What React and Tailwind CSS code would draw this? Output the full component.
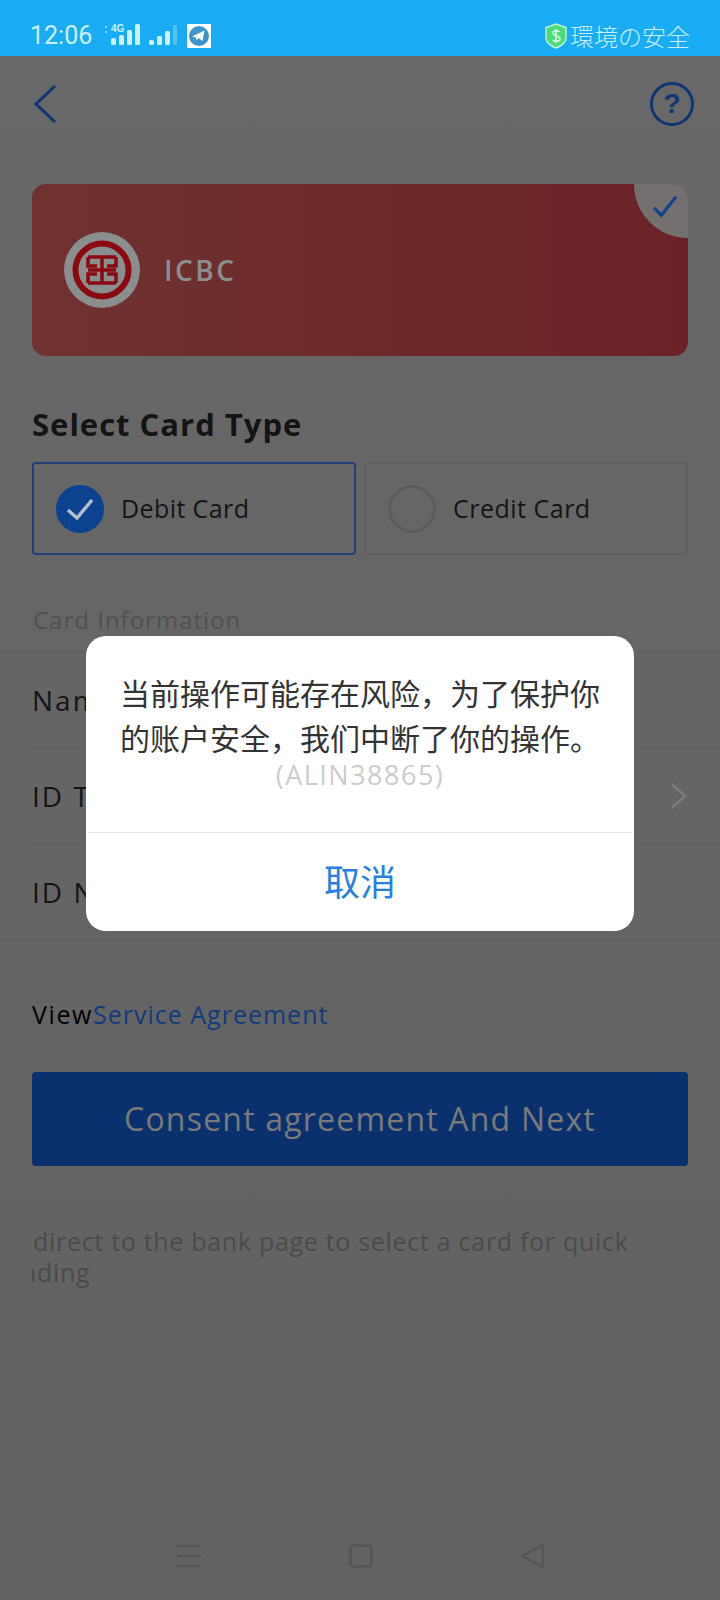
import React from "react";

const HAND = "font-['Open_Sans','Liberation_Sans',sans-serif]";
const CJK = "font-['Noto_Sans_CJK_SC','Noto_Sans_CJK_JP',sans-serif]";

function Signal() {
  return (
    <svg width="82" height="26" viewBox="0 0 82 26" className="ml-[10px]">
      <g fill="#cdeefc">
        <text x="9" y="9" fontSize="10" fontWeight="700" fontFamily="Liberation Sans, sans-serif">4G</text>
        <rect x="9" y="15" width="5" height="7" rx="1.5" />
        <rect x="17" y="12" width="5" height="10" rx="1.5" />
        <rect x="25" y="7" width="5" height="15" rx="1.5" />
        <rect x="33" y="1" width="5" height="21" rx="1.5" />
        <rect x="47" y="17" width="5" height="5" rx="1.5" />
        <rect x="55" y="13" width="5" height="9" rx="1.5" />
        <rect x="63" y="8" width="5" height="14" rx="1.5" />
        <rect x="71" y="2" width="4" height="20" rx="1.5" opacity="0.35" />
      </g>
      <rect x="3" y="3" width="2" height="2" fill="#cdeefc" opacity="0.6" />
      <rect x="3" y="8" width="2" height="2" fill="#cdeefc" opacity="0.6" />
    </svg>
  );
}

function Telegram() {
  return (
    <div className="w-[24px] h-[24px] bg-white flex items-center justify-center ml-[3px]">
      <svg width="22" height="22" viewBox="0 0 22 22">
        <circle cx="11" cy="11" r="10" fill="#3f94cc" />
        <path d="M4 11.5 16.5 5.5 14.5 16 10.5 13 8.5 15.5 8 12.5Z" fill="#fff" />
      </svg>
    </div>
  );
}

function Shield() {
  return (
    <svg width="22" height="26" viewBox="0 0 22 26">
      <path d="M11 1 21 4.5V15C21 20 15 23.500 11 25 7 23.500 1 20 1 15V4.500Z" fill="#4ddb7a" stroke="#bdf0d8" strokeWidth="1.500" />
      <path d="M14.500 9C14 7.500 8 7 8 10c0 3 7 2.500 7 6 0 3-6 2.500-7 1M11 6v14" fill="none" stroke="#d9f8e4" strokeWidth="1.600" />
    </svg>
  );
}

function IcbcLogo() {
  return (
    <div className="w-[76px] h-[76px] rounded-full bg-[#8a8e8e] flex items-center justify-center">
      <svg width="60" height="60" viewBox="0 0 60 60">
        <circle cx="30" cy="30" r="26.500" fill="none" stroke="#8b0a12" strokeWidth="6" />
        <path
          d="M16 17H44M16 17V26H25M44 17V26H35M30 17V43M16 30H44M16 43H44M16 43V34H25M44 43V34H35"
          fill="none"
          stroke="#8b0a12"
          strokeWidth="3.500"
        />
      </svg>
    </div>
  );
}

function Row({ label, chevron, last, height }) {
  return (
    <div className={`${height} flex items-center justify-between ml-[32px] ${last ? "" : "border-b border-[#5f5f5f]"}`}>
      <span className={`${HAND} text-[28px] font-medium text-[#141414] tracking-[2px]`}>{label}</span>
      {chevron && (
        <svg width="18" height="28" viewBox="0 0 18 28" className="mr-[32px]">
          <path d="M2 2 15 14 2 26" fill="none" stroke="#7b7b7b" strokeWidth="2.500" />
        </svg>
      )}
    </div>
  );
}

function TypeBox({ active, label, tracking }) {
  return (
    <div
      className={`flex-1 h-[93px] rounded-[4px] border-2 flex items-center pl-[22px] gap-[17px] ${
        active ? "border-[#1f3f78]" : "border-[#5f5f5f]"
      }`}
    >
      {active ? (
        <svg width="48" height="48" viewBox="0 0 48 48">
          <circle cx="24" cy="24" r="24" fill="#0c4290" />
          <path d="M12 25 21 33 36 15" fill="none" stroke="#b4bdcb" strokeWidth="3.500" />
        </svg>
      ) : (
        <div className="w-[48px] h-[48px] rounded-full border-[3px] border-[#5c5c5c]" />
      )}
      <span className={`${HAND} text-[25px] font-medium text-[#141414] ${tracking}`}>{label}</span>
    </div>
  );
}

export default function App() {
  return (
    <div className="relative w-[720px] h-[1600px] flex flex-col bg-gradient-to-b from-[#686868] to-[#626262] overflow-hidden">
      <div className="h-[56px] bg-[#1aabf5] flex items-center justify-between pl-[30px] pr-[30px] pt-[16px]">
        <div className="flex items-center">
          <span className="font-['Roboto',sans-serif] text-[25px] text-[#cdeefc]">12:06</span>
          <Signal />
          <Telegram />
        </div>
        <div className="flex items-center gap-[3px]">
          <Shield />
          <span className="font-['Noto_Sans_CJK_JP',sans-serif] font-light text-[24px] text-[#c8edfc]">環境の安全</span>
        </div>
      </div>

      <div className="h-[96px] flex items-center justify-between pl-[33px] pr-[26px]">
        <svg width="24" height="40" viewBox="0 0 24 40">
          <path d="M22 2 3 20 22 38" fill="none" stroke="#0f3575" strokeWidth="3" />
        </svg>
        <div className="w-[44px] h-[44px] rounded-full border-[3px] border-[#0f3575] flex items-center justify-center">
          <span className="font-['Liberation_Sans',sans-serif] font-bold text-[28px] text-[#0f3575]">?</span>
        </div>
      </div>

      <div className="relative mt-[32px] mx-[32px] h-[172px] rounded-[14px] bg-gradient-to-r from-[#703230] to-[#6a2226] overflow-hidden flex items-center pl-[32px] gap-[24px]">
        <IcbcLogo />
        <span className={`${HAND} text-[28px] font-semibold text-[#8a8e8e] tracking-[2.500px]`}>ICBC</span>
        <div className="absolute top-0 right-0 w-[54px] h-[54px] rounded-bl-[54px] bg-[#757070] flex items-center justify-center pl-[8px] pb-[10px]">
          <svg width="26" height="24" viewBox="0 0 28 26">
            <path d="M2 15 10 23 26 3" fill="none" stroke="#12428c" strokeWidth="3.500" />
          </svg>
        </div>
      </div>

      <div className={`${HAND} mt-[48px] mx-[32px] h-[40px] flex items-center text-[31px] font-bold text-[#141414] tracking-[1px]`}>
        Select Card Type
      </div>

      <div className="mt-[18px] mx-[32px] flex gap-[8px]">
        <TypeBox active label="Debit Card" tracking="tracking-[0.400px]" />
        <TypeBox label="Credit Card" tracking="tracking-[0.500px]" />
      </div>

      <div className={`${HAND} mt-[49px] mb-[16px] mx-[33px] h-[32px] flex items-center text-[24px] font-medium text-[#505050] tracking-[1px]`}>
        Card Information
      </div>

      <div className="border-y border-[#5f5f5f]">
        <Row label="Name" height="h-[95px]" />
        <Row label="ID Type" chevron height="h-[97px]" />
        <Row label="ID Number" last height="h-[94px]" />
      </div>

      <div className={`${HAND} mt-[59px] mx-[32px] h-[32px] flex items-center text-[25px] font-medium tracking-[1px]`}>
        <span className="text-black tracking-[1.600px]">View</span>
        <span className="text-[#123a7c]">Service Agreement</span>
      </div>

      <div className={`${HAND} mt-[41px] mx-[32px] h-[94px] rounded-[4px] bg-[#0a306e] flex items-center justify-center text-[32px] font-medium text-[#7a7a7a] tracking-[1.200px]`}>
        Consent agreement And Next
      </div>

      <div className={`${HAND} mt-[60px] mx-[32px] text-[25px] font-medium leading-[31px] text-[#4a4a4a] tracking-[0.700px] whitespace-nowrap`}>
        <div className="ml-[1px]">direct to the bank page to select a card for quick</div>
        <div className="overflow-hidden pb-[4px]">
          <div className="-ml-[11px]">nding</div>
        </div>
      </div>

      <div className="mt-auto h-[88px] flex items-center justify-center gap-[145px]">
        <svg width="24" height="24" viewBox="0 0 24 24">
          <path d="M0 2H24M0 12H24M0 22H24" stroke="#555" strokeWidth="2" />
        </svg>
        <div className="w-[30px] h-[24px] flex justify-center">
          <div className="w-[24px] h-[24px] rounded-[5px] border-[3px] border-[#555]" />
        </div>
        <svg width="23" height="24" viewBox="0 0 23 24">
          <path d="M22 1V23L1 12Z" fill="none" stroke="#555" strokeWidth="2" />
        </svg>
      </div>

      <div className="absolute left-[86px] top-[636px] w-[548px] h-[295px] bg-white rounded-[20px] flex flex-col">
        <div className="flex-1 pt-[34px]">
          <p className={`${CJK} pl-[34px] text-[30px] leading-[45px] text-[#333] w-[520px]`}>
            当前操作可能存在风险，为了保护你的账户安全，我们中断了你的操作。
          </p>
          <p className={`${HAND} text-center text-[27px] font-medium leading-[36px] text-[#cccccc] tracking-[1.500px] -mt-[3px]`}>(ALIN38865)</p>
        </div>
        <div className="mx-[2px] h-px bg-[#e2e2e2]" />
        <div className={`${CJK} h-[98px] pb-[4px] flex items-center justify-center text-[36px] text-[#2a7fe0]`}>取消</div>
      </div>
    </div>
  );
}
